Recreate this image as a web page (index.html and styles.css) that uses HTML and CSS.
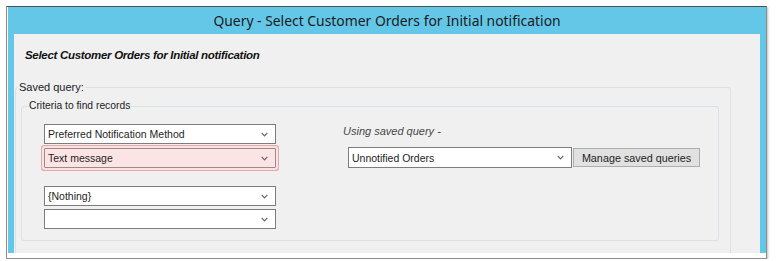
FILE: index.html
```html
<!DOCTYPE html>
<html lang="en">
<head>
    <meta charset="UTF-8">
    <meta name="viewport" content="width=device-width, initial-scale=1.0">
    <title>Query - Select Customer Orders for Initial notification</title>
    <link rel="stylesheet" href="styles.css">
</head>
<body>
    <div class="frame">
        <div class="window">
            <div class="titlebar">Query - Select Customer Orders for Initial notification</div>
            <div class="panel">
                <div class="heading">Select Customer Orders for Initial notification</div>

                <fieldset class="group outer">
                    <legend>Saved query:</legend>

                    <fieldset class="group inner">
                        <legend>Criteria to find records</legend>

                        <div class="criteria">
                            <div class="col-left">
                                <div class="combo">
                                    <span>Preferred Notification Method</span>
                                    <svg width="7" height="5" viewBox="0 0 7 5"><path d="M0.7 0.8 L3.5 3.8 L6.3 0.8" fill="none" stroke="#666" stroke-width="1.2"/></svg>
                                </div>
                                <div class="combo invalid">
                                    <span>Text message</span>
                                    <svg width="7" height="5" viewBox="0 0 7 5"><path d="M0.7 0.8 L3.5 3.8 L6.3 0.8" fill="none" stroke="#666" stroke-width="1.2"/></svg>
                                </div>
                                <div class="combo spaced">
                                    <span>{Nothing}</span>
                                    <svg width="7" height="5" viewBox="0 0 7 5"><path d="M0.7 0.8 L3.5 3.8 L6.3 0.8" fill="none" stroke="#666" stroke-width="1.2"/></svg>
                                </div>
                                <div class="combo tight">
                                    <span></span>
                                    <svg width="7" height="5" viewBox="0 0 7 5"><path d="M0.7 0.8 L3.5 3.8 L6.3 0.8" fill="none" stroke="#666" stroke-width="1.2"/></svg>
                                </div>
                            </div>

                            <div class="col-right">
                                <div class="hint">Using saved query -</div>
                                <div class="saved-row">
                                    <div class="combo wide">
                                        <span>Unnotified Orders</span>
                                        <svg width="7" height="5" viewBox="0 0 7 5"><path d="M0.7 0.8 L3.5 3.8 L6.3 0.8" fill="none" stroke="#666" stroke-width="1.2"/></svg>
                                    </div>
                                    <button class="manage">Manage saved queries</button>
                                </div>
                            </div>
                        </div>
                    </fieldset>
                </fieldset>
            </div>
        </div>
    </div>
</body>
</html>
```

FILE: styles.css
```css
* {
    box-sizing: border-box;
}

body {
    margin: 0;
    background: #ffffff;
    font-family: 'Liberation Sans', Arial, sans-serif;
    color: #1e1e1e;
}

.frame {
    margin: 6px 0 0 6px;
    width: 761px;
    height: 253px;
    border: 1px solid #8c8c8c;
    border-top-color: #4f4f4f;
    padding: 0 0 5px 1px;
    background: #ffffff;
    box-shadow: 1px 1px 2px rgba(0,0,0,0.25);
    display: flex;
}

.window {
    flex: 1;
    background: #64c7e8;
    display: flex;
    flex-direction: column;
    padding: 0 6px;
    overflow: hidden;
}

.titlebar {
    height: 27px;
    line-height: 28px;
    text-align: center;
    font-family: 'Noto Sans', 'Open Sans', sans-serif;
    font-size: 13.9px;
    color: #1b1b1b;
}

.panel {
    flex: 1;
    background: #f0f0f0;
    padding: 14px 0 0 1px;
    overflow: hidden;
}

.heading {
    margin-left: 10px;
    font-size: 11.5px;
    font-weight: bold;
    font-style: italic;
    letter-spacing: -0.3px;
    line-height: 14px;
    color: #111;
}

.group {
    margin: 0;
    border: 1px solid #dbe0e5;
    border-radius: 3px;
    min-width: 0;
}

.group legend {
    padding: 0 1px;
    line-height: 14px;
    color: #222;
}

.outer {
    margin-top: 18px;
    width: 716px;
    padding: 0 0 20px 2px;
}

.outer > legend {
    font-size: 11px;
}

.inner {
    margin: 5px 0 0 3px;
    width: 698px;
    padding: 11px 0 11px 6px;
}

.inner > legend {
    font-size: 10.3px;
}

.criteria {
    display: flex;
    margin-left: 16px;
}

.col-left {
    width: 232px;
    display: flex;
    flex-direction: column;
}

.combo {
    height: 20px;
    border: 1px solid #7d7d7d;
    background: #ffffff;
    display: flex;
    align-items: center;
    justify-content: space-between;
    padding: 0 7px 0 3px;
    font-size: 10.5px;
    color: #1e1e1e;
}

.combo + .combo {
    margin-top: 4px;
}

.combo.spaced {
    margin-top: 18px;
}

.combo.tight {
    margin-top: 3px;
}

.combo.invalid {
    background: #fce4e4;
    border-color: #9a8c8c;
    border-radius: 1px;
    box-shadow: 0 0 0 2px #fbe2e2, 0 0 0 3px #eba7a7;
}

.col-right {
    margin-left: 67px;
}

.hint {
    font-size: 11px;
    font-style: italic;
    line-height: 14px;
    color: #474747;
}

.saved-row {
    display: flex;
    align-items: center;
    margin: 9px 0 0 5px;
}

.combo.wide {
    width: 224px;
    height: 21px;
}

.manage {
    margin-left: 1px;
    width: 127px;
    height: 19px;
    padding: 0;
    background: #e1e1e1;
    border: 1px solid #adadad;
    font-family: 'Liberation Sans', Arial, sans-serif;
    font-size: 10.8px;
    color: #1e1e1e;
}
```
